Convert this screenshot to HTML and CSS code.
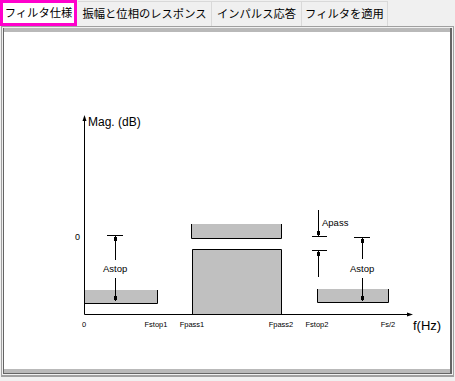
FILE: index.html
```html
<!DOCTYPE html>
<html>
<head>
<meta charset="utf-8">
<link rel="stylesheet" href="styles.css">
</head>
<body>
<div class="tabs">
  <div class="tab active t1">フィルタ仕様</div>
  <div class="tab t2">振幅と位相のレスポンス</div>
  <div class="tab t3">インパルス応答</div>
  <div class="tab t4">フィルタを適用</div>
</div>
<div class="panel">
  <div class="frame">
    <div class="strip"></div>
    <div class="canvas">
      <svg class="chart" width="447" height="341" viewBox="4 32 447 341" xmlns="http://www.w3.org/2000/svg">
        <g fill="#c0c0c0" stroke="none">
          <rect x="84" y="290" width="73" height="13"/>
          <rect x="191" y="224" width="91" height="14"/>
          <rect x="192" y="249" width="89" height="65"/>
          <rect x="317" y="289" width="71" height="13"/>
        </g>
        <g stroke="#000" stroke-width="1" fill="none">
          <path d="M84.5 118 V314.5 H410"/>
          <path d="M84 303.5 H157.5 V290"/>
          <path d="M191.5 224 V238.5 H281.5 V224"/>
          <path d="M192.5 314 V249.5 H281.5 V314"/>
          <path d="M317.5 289 V302.5 H388.5 V289"/>
          <path d="M107 235.5 H123 M115.5 235.5 V260 M115.5 278 V301"/>
          <path d="M318.5 210 V236 M312 236.5 H327 M312 250.5 H327 M318.5 250.5 V277"/>
          <path d="M354 237.5 H370 M362.5 237.5 V259 M362.5 278 V301"/>
        </g>
        <g fill="#000">
          <path d="M84.5 115 L82.5 121 L86.5 121 Z"/>
          <path d="M413 314.5 L407 312.5 L407 316.5 Z"/>
          <rect x="114" y="237" width="3" height="4"/>
          <rect x="114" y="296" width="3" height="4"/>
          <rect x="317" y="231" width="3" height="4"/>
          <rect x="317" y="252" width="3" height="4"/>
          <rect x="361" y="239" width="3" height="4"/>
          <rect x="361" y="296" width="3" height="4"/>
        </g>
        <g font-family="Liberation Sans, Arial, sans-serif" fill="#000">
          <text x="88" y="126" font-size="12">Mag. (dB)</text>
          <text x="413" y="330" font-size="13">f(Hz)</text>
          <text x="75" y="240" font-size="9">0</text>
          <text x="103" y="272" font-size="9.5">Astop</text>
          <text x="350" y="272" font-size="9.5">Astop</text>
          <text x="322" y="226" font-size="9.5">Apass</text>
          <g font-size="7.5" text-anchor="middle">
            <text x="84" y="327">0</text>
            <text x="156" y="327">Fstop1</text>
            <text x="192" y="327">Fpass1</text>
            <text x="281" y="327">Fpass2</text>
            <text x="317" y="327">Fstop2</text>
            <text x="388" y="327">Fs/2</text>
          </g>
        </g>
      </svg>
    </div>
    <div class="strip"></div>
  </div>
</div>
</body>
</html>
```
FILE: styles.css
```css
html, body {
  margin: 0;
  padding: 0;
  background: #f0f0f0;
  width: 455px;
  height: 381px;
  overflow: hidden;
}
.tabs {
  display: flex;
  height: 26px;
  align-items: stretch;
  font-family: "Noto Sans CJK JP", sans-serif;
  font-size: 11.3px;
  color: #000;
}
.tab {
  display: flex;
  align-items: center;
  justify-content: center;
  box-sizing: border-box;
  margin-top: 1px;
  border: 1px solid #d9d9d9;
  border-left: none;
  border-bottom: none;
  background: #f0f0f0;
  line-height: 1;
  white-space: nowrap;
}
.tab.active {
  margin-top: 0;
  border: 3px solid #ff00cc;
  background: #fff;
  margin-right: 1px;
}
.t1 { width: 77px; }
.t2 { width: 134px; }
.t3 { width: 90px; }
.t4 { width: 86px; }
.panel {
  margin: 0 1px;
  border: 1px solid #a0a0a0;
  border-bottom-width: 2px;
  padding: 1px;
  height: 351px;
  box-sizing: border-box;
}
.frame {
  height: 100%;
  box-sizing: border-box;
  border-left: 1px solid #646464;
  border-right: 2px solid #646464;
  border-bottom: 1px solid #646464;
  display: flex;
  flex-direction: column;
}
.strip {
  height: 4px;
  background: #b9b9b9;
  flex: none;
}
.canvas {
  flex: 1;
  background: #fff;
  overflow: hidden;
}
.chart {
  display: block;
}
```
